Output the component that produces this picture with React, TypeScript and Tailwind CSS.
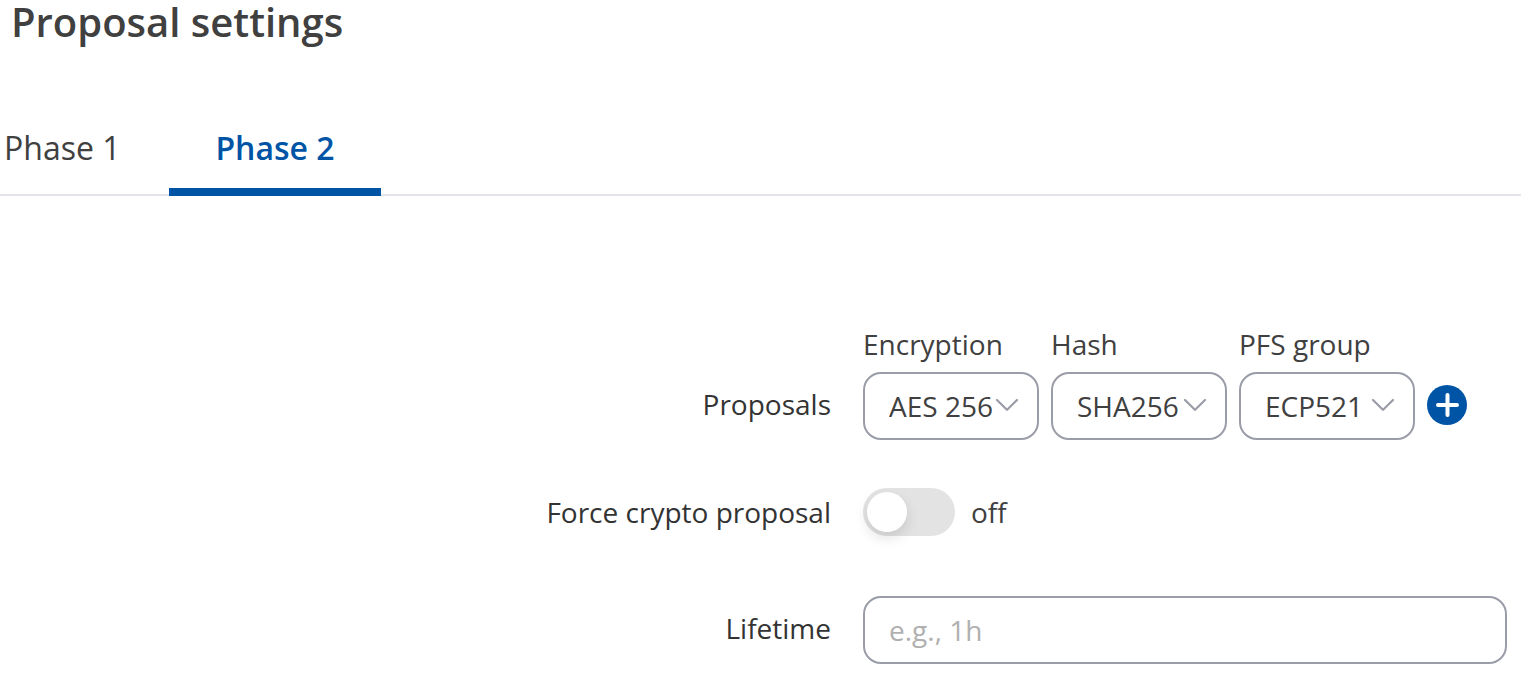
import { useState } from "react";

const proposalFields = [
  { id: "encryption", label: "Encryption", options: ["AES 256", "AES 192", "AES 128"] },
  { id: "hash", label: "Hash", options: ["SHA256", "SHA384", "SHA512"] },
  { id: "pfs-group", label: "PFS group", options: ["ECP521", "ECP384", "ECP256"] },
];

const tabs = ["Phase 1", "Phase 2"];

function SelectField({ id, label, options }: { id: string; label: string; options: string[] }) {
  return (
    <div className="flex w-44 flex-col">
      <label htmlFor={id} className="mb-2 leading-10">
        {label}
      </label>
      <div className="relative">
        <select
          id={id}
          className="block h-[68px] w-full appearance-none rounded-[18px] border-2 border-[#9a9ca8] bg-white pl-6"
        >
          {options.map((option) => (
            <option key={option}>{option}</option>
          ))}
        </select>
        <svg
          className="pointer-events-none absolute top-6 right-5 h-4 w-6"
          viewBox="0 0 24 16"
          fill="none"
          stroke="#9a9ca8"
          strokeWidth="2.2"
          strokeLinecap="round"
          strokeLinejoin="round"
          aria-hidden="true"
        >
          <path d="M2 4 11.4 13.3Q12 13.8 12.6 13.3L22 4" />
        </svg>
      </div>
    </div>
  );
}

export default function App() {
  const [active, setActive] = useState("Phase 2");
  const [forced, setForced] = useState(false);

  return (
    <main className="min-h-screen bg-white font-['Open_Sans','Noto_Sans',sans-serif] text-[28px] text-[#404040]">
      <h1 className="px-[11px] text-[40px] leading-11 font-semibold">Proposal settings</h1>

      <div role="tablist" className="mt-[58px] flex border-b-2 border-[#e3e3e9]">
        {tabs.map((tab) => (
          <button
            key={tab}
            role="tab"
            aria-selected={active === tab}
            onClick={() => setActive(tab)}
            className={
              active === tab
                ? "-mb-0.5 h-[94px] w-[212px] border-b-8 border-[#0054a6] pt-1.5 text-[32px] font-semibold text-[#0054a6]"
                : "h-[92px] w-[169px] pl-1 text-left text-[32px]"
            }
          >
            {tab}
          </button>
        ))}
      </div>

      <form className="grid grid-cols-[831px_minmax(0,1fr)] gap-x-8 pt-32 pr-3.5">
        <span className="mt-15 text-right leading-10 text-[#333333]">Proposals</span>
        <div className="flex items-end gap-3">
          {proposalFields.map((field) => (
            <SelectField key={field.id} {...field} />
          ))}
          <button type="button" aria-label="Add proposal" className="mb-[15px] size-10 rounded-full bg-[#0054a6]">
            <svg viewBox="0 0 40 40" fill="none" stroke="white" strokeWidth="4" strokeLinecap="round" aria-hidden="true">
              <path d="M20.5 10v20M11 20h19" />
            </svg>
          </button>
        </div>

        <label htmlFor="force-crypto" className="mt-[52px] text-right leading-10 text-[#333333]">
          Force crypto proposal
        </label>
        <div className="mt-12 flex h-12 items-center gap-4">
          <input
            id="force-crypto"
            type="checkbox"
            role="switch"
            checked={forced}
            onChange={(event) => setForced(event.target.checked)}
            className="h-12 w-23 appearance-none rounded-full bg-[#e3e3e3] p-1 before:block before:size-10 before:rounded-full before:bg-white before:shadow-[0_6px_14px_rgba(0,0,0,0.12)] checked:bg-[#0054a6] checked:before:translate-x-11"
          />
          <span className="leading-10">{forced ? "on" : "off"}</span>
        </div>

        <label htmlFor="lifetime" className="mt-18 text-right leading-10 text-[#333333]">
          Lifetime
        </label>
        <input
          id="lifetime"
          type="text"
          placeholder="e.g., 1h"
          className="mt-15 h-[68px] w-full rounded-[18px] border-2 border-[#9a9ca8] px-6 placeholder:text-[#b0b0b0]"
        />
      </form>
    </main>
  );
}
